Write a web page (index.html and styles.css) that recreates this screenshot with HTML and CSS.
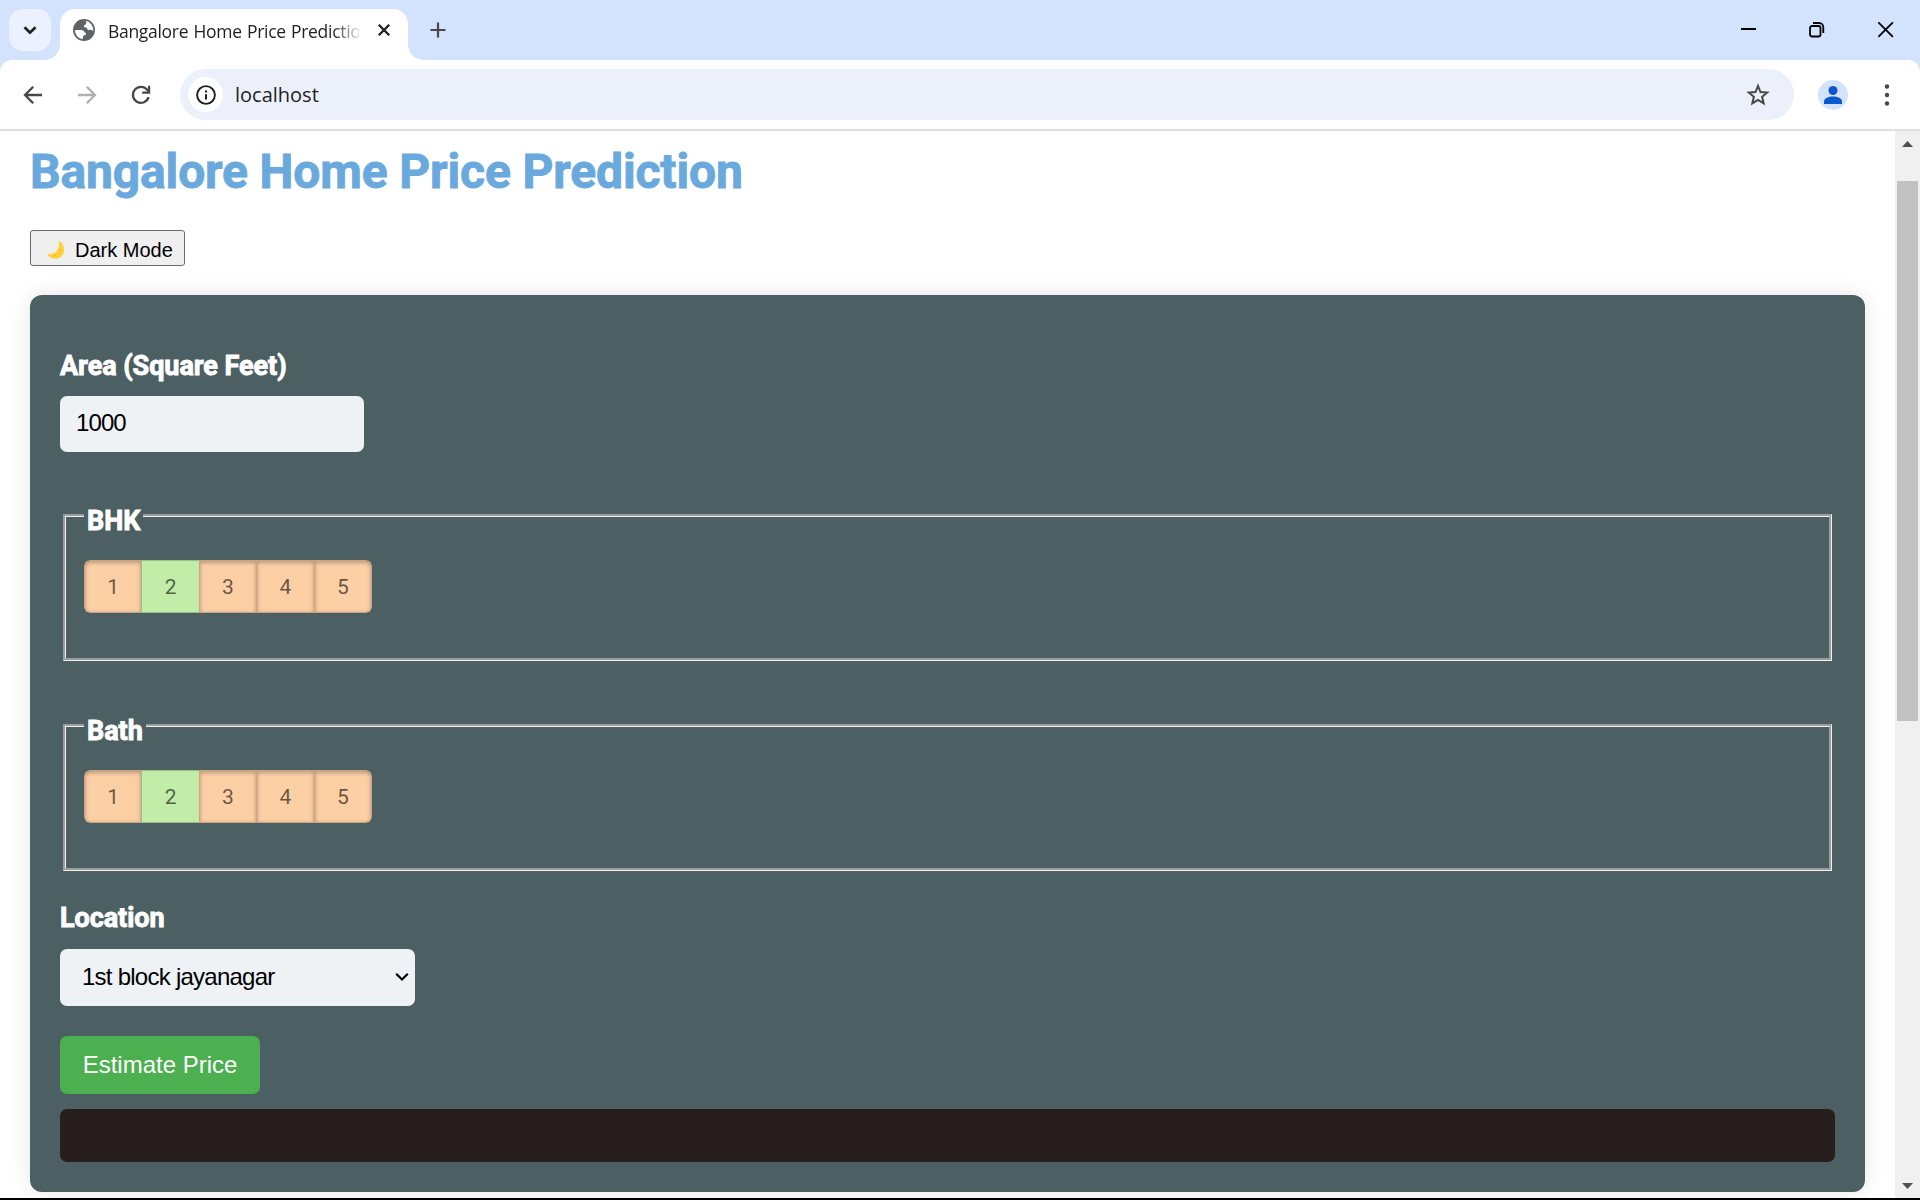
FILE: index.html
```html
<!DOCTYPE html>
<html lang="en">
<head>
<meta charset="utf-8">
<title>Bangalore Home Price Prediction</title>
<link rel="stylesheet" href="styles.css">
</head>
<body>
<div class="window">
  <header class="tabstrip">
    <div class="tab-search">
      <svg width="42" height="42" viewBox="0 0 42 42"><path d="M15.5 18.2 21 23.6l5.500-5.400" fill="none" stroke="#1f1f1f" stroke-width="2.600"/></svg>
    </div>
    <div class="tab">
      <svg class="favicon" width="22" height="22" viewBox="0 0 22 22"><circle cx="11" cy="11" r="11" fill="#5f6368"/><path d="M12 1.800a9.300 9.300 0 0 1 8.200 10.700c-1.300-1.700-2.400-1.700-4.200-1.600-1.700 0-2-.9-2-2.200-1.600-.2-2.800.2-3.100-1.200-.4-1.700 2-1.500 2.400-3.300.1-.900-.2-1.800-1.300-2.400Z" fill="#fff"/><path d="M1.800 11.300c2.500-.3 5.400-.5 7.700 0 1.700.5 1.700 2.500 3.300 2.600v2.200c-1.600 0-2.400.6-2.700 1.600-.2.900-.5 1.700-.5 2.500a9.400 9.400 0 0 1-7.800-8.900Z" fill="#fff"/></svg>
      <span class="tab-title">Bangalore Home Price Prediction</span>
      <svg class="tab-close" width="14" height="14" viewBox="0 0 14 14"><path d="m1.800 1.800 10.400 10.400M12.200 1.800 1.800 12.200" stroke="#1f1f1f" stroke-width="2.300"/></svg>
    </div>
    <svg class="new-tab" width="16" height="16" viewBox="0 0 16 16"><path d="M8 .500v15M.500 8h15" stroke="#474747" stroke-width="2.200"/></svg>
    <div class="caption-buttons">
      <svg width="16" height="16" viewBox="0 0 16 16"><path d="M1 7h15" stroke="#000" stroke-width="2"/></svg>
      <svg width="16" height="16" viewBox="0 0 16 16"><rect x="1" y="4" width="10.500" height="10.500" rx="2" fill="none" stroke="#000" stroke-width="1.800"/><path d="M4 1h6a4.300 4.300 0 0 1 4.300 4.300V11" fill="none" stroke="#000" stroke-width="1.800"/></svg>
      <svg width="16" height="16" viewBox="0 0 16 16"><path d="m.300.300 14.600 14.600M14.900.300.300 14.900" stroke="#000" stroke-width="1.800"/></svg>
    </div>
  </header>

  <nav class="toolbar">
    <svg class="nav-icon" width="24" height="24" viewBox="0 0 24 24"><path d="M21 12H4.500M12.200 3.700 4 12l8.200 8.300" fill="none" stroke="#474747" stroke-width="2.300"/></svg>
    <svg class="nav-icon" width="24" height="24" viewBox="0 0 24 24"><path d="M3 12h16.500M11.800 3.700 20 12l-8.200 8.300" fill="none" stroke="#b0b0b0" stroke-width="2.300"/></svg>
    <svg class="nav-icon" width="24" height="24" viewBox="0 0 24 24"><path d="M19.600 14.200a8 8 0 1 1-1.600-7.600l2 2.200" fill="none" stroke="#474747" stroke-width="2.300"/><path d="M21.200 2.700v8h-8V8.500H19V2.700Z" fill="#474747"/></svg>
    <div class="omnibox">
      <span class="site-info"><svg width="20" height="20" viewBox="0 0 20 20"><circle cx="10" cy="10" r="8.900" fill="none" stroke="#1f1f1f" stroke-width="1.900"/><path d="M10 9.200v5.400M10 5.400v2" stroke="#1f1f1f" stroke-width="2"/></svg></span>
      <span class="url">localhost</span>
      <svg class="star" width="24" height="24" viewBox="0 0 24 24"><path d="m12 2.800 2.500 6.200 6.700.5-5.100 4.300 1.600 6.600L12 16.900l-5.700 3.500 1.600-6.600-5.100-4.300 6.700-.5Z" fill="none" stroke="#474747" stroke-width="2"/></svg>
    </div>
    <svg class="avatar" width="30" height="30" viewBox="0 0 30 30"><circle cx="15" cy="15" r="15" fill="#d3e3fd"/><circle cx="15" cy="10.500" r="4.500" fill="#0b57d0"/><path d="M6 24v-2.200C6 18 10.500 16.500 15 16.500s9 1.500 9 5.300V24Z" fill="#0b57d0"/></svg>
    <svg class="menu" width="6" height="24" viewBox="0 0 6 24"><g fill="#474747"><circle cx="3" cy="3.500" r="2.200"/><circle cx="3" cy="12" r="2.200"/><circle cx="3" cy="20.500" r="2.200"/></g></svg>
  </nav>

  <div class="viewport">
    <main class="page">
      <h1>Bangalore Home Price Prediction</h1>
      <button class="theme-toggle" type="button">
        <svg width="20" height="20" viewBox="0 0 20 20"><path d="M12.500.8c3.500 1.700 6 5.200 5.600 9.700-.5 5-4.200 8.300-8.900 8.300-3.800 0-6.700-2-8.200-5.200 2.700.9 6 .7 8.600-1.600 3.200-2.800 3.900-7.300 2.900-11.200Z" fill="#ffd23c"/><g fill="#e9b92c"><circle cx="14.700" cy="10" r="1.100"/><circle cx="9" cy="15.700" r="1"/><circle cx="13.200" cy="13.500" r=".7"/></g></svg>
        <span>Dark Mode</span>
      </button>

      <form class="card">
        <label class="heading" for="area">Area (Square Feet)</label>
        <input class="area" id="area" type="text" value="1000">

        <fieldset>
          <legend class="heading"><span>BHK</span></legend>
          <div class="switch"><span>1</span><span class="on">2</span><span>3</span><span>4</span><span>5</span></div>
        </fieldset>

        <fieldset>
          <legend class="heading"><span>Bath</span></legend>
          <div class="switch"><span>1</span><span class="on">2</span><span>3</span><span>4</span><span>5</span></div>
        </fieldset>

        <span class="heading location-label">Location</span>
        <div class="location">
          <span>1st block jayanagar</span>
          <svg width="14" height="10" viewBox="0 0 14 10"><path d="m1.200 1.700 5.800 5.800 5.800-5.800" fill="none" stroke="#000" stroke-width="2.200"/></svg>
        </div>
        <button class="submit" type="button">Estimate Price</button>
        <div class="result"></div>
      </form>
    </main>
    <aside class="scrollbar">
      <svg width="11" height="6" viewBox="0 0 11 6"><path d="M0 6 5.500 0 11 6Z" fill="#505050"/></svg>
      <div class="thumb"></div>
      <svg class="down" width="11" height="6" viewBox="0 0 11 6"><path d="M0 0h11L5.500 6Z" fill="#505050"/></svg>
    </aside>
  </div>
</div>
</body>
</html>
```
FILE: styles.css
```css
* { box-sizing: border-box; }
html, body { margin: 0; height: 100%; overflow: hidden; }
body { background: #000; font-family: Roboto, sans-serif; }
svg { display: block; flex: none; }

.window { display: flex; flex-direction: column; width: 1920px; height: 1198px; background: #d3e2fd; }

/* tab strip */
.tabstrip { display: flex; height: 60px; padding-left: 9px; font-family: "Open Sans", sans-serif; }
.tab-search { width: 42px; height: 42px; margin: 9px 9px 0 0; border-radius: 14px; background: #ebf1fe; }
.tab { position: relative; display: flex; width: 348px; height: 51px; margin-top: 9px; padding-left: 13px; border-radius: 15px 15px 0 0; background: #fff; }
.tab::before, .tab::after { content: ""; position: absolute; bottom: 0; width: 15px; height: 15px; }
.tab::before { left: -15px; background: radial-gradient(circle at 0 0, transparent 14.5px, #fff 15px); }
.tab::after { right: -15px; background: radial-gradient(circle at 100% 0, transparent 14.5px, #fff 15px); }
.favicon { margin-top: 10px; }
.tab-title { width: 251px; margin-left: 13px; overflow: hidden; white-space: nowrap; color: #1f1f1f; font-size: 17.500px; line-height: 24px; padding-top: 10px; letter-spacing: -.3px; word-spacing: 1px; -webkit-mask-image: linear-gradient(90deg, #000 225px, transparent 254px); mask-image: linear-gradient(90deg, #000 225px, transparent 254px); }
.tab-close { margin: 14px 0 0 18px; }
.new-tab { margin: 22px 0 0 22px; }
.caption-buttons { display: flex; gap: 53px; margin: 22px 26px 0 auto; }

/* toolbar */
.toolbar { display: flex; align-items: center; height: 71px; padding: 0 30px 0 21px; border-bottom: 2px solid #dfdfdf; border-radius: 12px 12px 0 0; background: #fff; }
.nav-icon { margin-right: 30px; }
.omnibox { display: flex; align-items: center; width: 1614px; height: 51px; margin-left: -3px; padding: 0 24px 0 8px; border-radius: 26px; background: #ecf0fa; }
.site-info { display: grid; place-items: center; width: 35px; height: 35px; border-radius: 50%; background: #fff; }
.url { margin-left: 12px; color: #1f1f1f; font: 20px/30px "Open Sans", sans-serif; }
.star { margin-left: auto; }
.avatar { margin-left: 24px; }
.menu { margin-left: auto; }

/* page area */
.viewport { display: flex; flex: 1; min-height: 0; background: #fff; }
.page { width: 1895px; padding: 0 30px; overflow: hidden; }
h1 { margin: 12px 0 0; color: #6aa9dd; font-size: 48px; line-height: 58px; font-weight: 700; letter-spacing: -.15px; -webkit-text-stroke: .9px #6aa9dd; white-space: nowrap; }
.theme-toggle { display: flex; align-items: center; gap: 9px; width: 155px; height: 36px; margin-top: 29px; padding: 4px 0 0 15px; border: 1px solid #6b6b6b; border-radius: 3px; background: #efefef; color: #000; font: 20px/24px "Liberation Sans", sans-serif; white-space: nowrap; }

.card { display: flex; flex-direction: column; align-items: flex-start; width: 1835px; height: 897px; margin-top: 29px; padding: 53px 30px 30px; border-radius: 12px; background: #4c5f62; box-shadow: 0 0 22px rgba(0, 0, 0, .1); }
.heading { color: #fff; font-size: 27px; line-height: 36px; font-weight: 700; letter-spacing: -.06px; -webkit-text-stroke: .9px #fff; white-space: nowrap; }
.area { width: 304px; height: 56px; margin-top: 12px; padding: 0 0 2px 16px; border: 0; border-radius: 7px; background: #eef2f4; color: #000; font: 24px "Liberation Sans", sans-serif; letter-spacing: -.9px; }

fieldset { width: 1769px; height: 164px; min-width: 0; margin: 45px 0 0 3px; padding: 27px 18px 0; border: 3px groove #f0f0f0; }
fieldset + fieldset { margin-top: 46px; }
legend { padding: 0 3px; }
legend span { position: relative; top: 6px; }
.switch { display: flex; width: 288px; height: 53px; overflow: hidden; border-radius: 6px; }
.switch span { flex: 1; margin-right: -1px; padding-top: 1px; border: 1px solid rgba(0, 0, 0, .2); background: #fccfa5; box-shadow: inset 0 1.5px 4.5px rgba(0, 0, 0, .3); color: rgba(0, 0, 0, .6); font-size: 21px; line-height: 50px; text-align: center; }
.switch span:first-child { border-radius: 6px 0 0 6px; }
.switch span:last-child { margin-right: 0; border-radius: 0 6px 6px 0; }
.switch .on { background: #c1eda9; box-shadow: none; }

.location-label { margin-top: 29px; }
.location { display: flex; align-items: center; justify-content: space-between; width: 355px; height: 57px; margin-top: 13px; padding: 0 6px 1px 22px; border-radius: 7px; background: #eef2f4; color: #000; font: 24px "Liberation Sans", sans-serif; letter-spacing: -.75px; }
.submit { width: 200px; height: 58px; margin-top: 30px; padding: 0; border: 0; border-radius: 7px; background: #4caf50; color: #fff; font: 24px "Liberation Sans", sans-serif; }
.result { width: 1775px; height: 53px; margin-top: 15px; border-radius: 7px; background: #271e1d; }

/* scrollbar */
.scrollbar { display: flex; flex-direction: column; align-items: center; width: 25px; padding: 10px 0 9px; background: #f0f0f0; }
.thumb { width: 21px; height: 540px; margin-top: 34px; background: #c1c1c1; }
.down { margin-top: auto; }
```
